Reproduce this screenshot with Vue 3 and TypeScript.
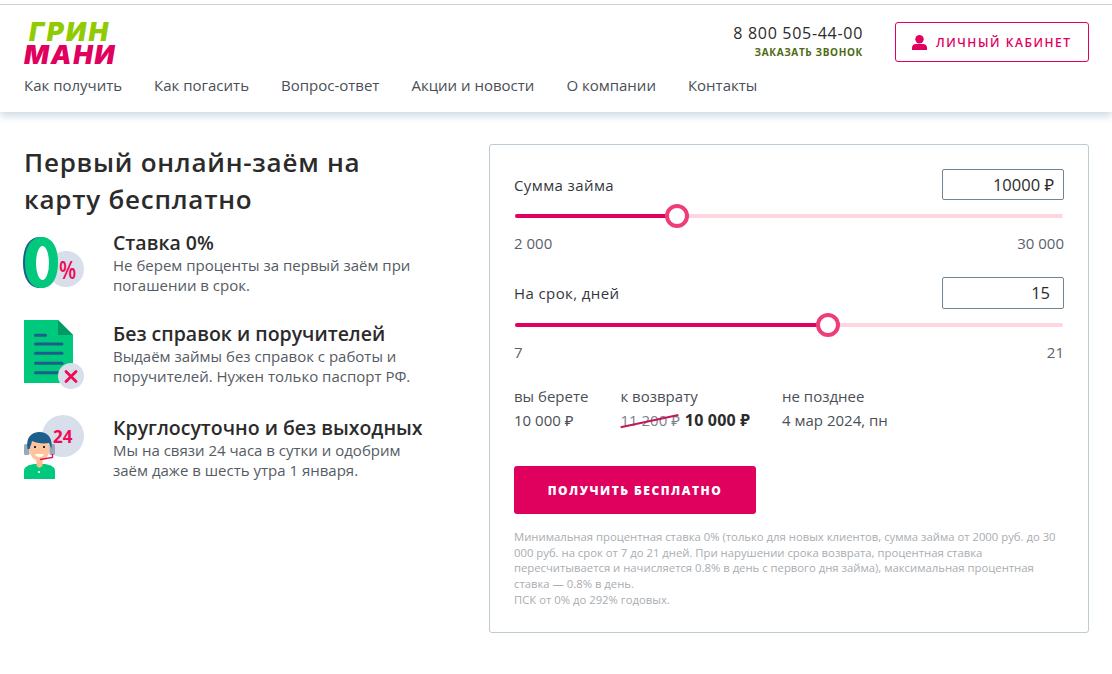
<script setup lang="ts">
const navItems = ['Как получить', 'Как погасить', 'Вопрос-ответ', 'Акции и новости', 'О компании', 'Контакты']

const sliders = [
  { label: 'Сумма займа', value: '10000 ₽', min: '2 000', max: '30 000', percent: 29.6, cls: 'money' },
  { label: 'На срок, дней', value: '15', min: '7', max: '21', percent: 57.1, cls: 'days' },
]
</script>

<template>
  <div class="page">
    <header class="header">
      <div class="header-top">
        <div class="logo">
          <span class="logo-green">ГРИН</span>
          <span class="logo-pink">МАНИ</span>
        </div>
        <div class="contacts">
          <div class="phone-box">
            <div class="phone">8 800 505-44-00</div>
            <div class="callback">ЗАКАЗАТЬ ЗВОНОК</div>
          </div>
          <a class="cabinet">
            <svg width="15" height="15" viewBox="0 0 15 15">
              <circle cx="7.500" cy="4.200" r="4.200" fill="#e0005e" />
              <path d="M0 15 V12.500 C0 10 2 9 4 9 H11 C13 9 15 10 15 12.500 V15 Z" fill="#e0005e" />
            </svg>
            ЛИЧНЫЙ КАБИНЕТ
          </a>
        </div>
      </div>
      <nav class="nav">
        <a v-for="item in navItems" :key="item">{{ item }}</a>
      </nav>
    </header>

    <main class="main">
      <section class="benefits">
        <h1>Первый онлайн-заём на<br />карту бесплатно</h1>

        <div class="benefit">
          <svg class="benefit-icon" width="62" height="64" viewBox="0 -1 62 64">
            <circle cx="42" cy="37" r="18" fill="#d8deea" />
            <path d="M16 5 C27 5 33 15 33 30.500 C33 46 27 56 16 56 C5 56 -1 46 -1 30.500 C-1 15 5 5 16 5 Z" fill="#1c5f8c" />
            <path d="M17.500 5 C28 5 34 15 34 30.500 C34 46 28 56 17.500 56 C7 56 1 46 1 30.500 C1 15 7 5 17.500 5 Z" fill="#00c97d" />
            <ellipse cx="18.500" cy="31" rx="6.500" ry="17" fill="#fff" />
            <text x="35" y="47" class="percent" transform="translate(35 47) scale(0.8 1) translate(-35 -47)">%</text>
          </svg>
          <div class="benefit-text">
            <h3>Ставка 0%</h3>
            <p>Не берем проценты за первый заём при погашении в срок.</p>
          </div>
        </div>

        <div class="benefit wide-gap">
          <svg class="benefit-icon" width="62" height="64" viewBox="0 0 62 64">
            <path d="M0 -2 H34 L49 13 V61 H0 Z" fill="#00c97d" />
            <path d="M34 -2 L49 13 H34 Z" fill="#029a62" />
            <g stroke="#1c5f8c" stroke-width="3" stroke-linecap="round">
              <path d="M11.500 13.300 H21.500" />
              <path d="M11.500 22 H38" />
              <path d="M11.500 31.300 H38" />
              <path d="M11.500 41.300 H38" />
              <path d="M11.500 50.700 H38" />
            </g>
            <circle cx="47" cy="54" r="13" fill="#d8deea" />
            <path d="M42 49.500 L52 59.500 M52 49.500 L42 59.500" stroke="#ef0a55" stroke-width="2.800" stroke-linecap="round" />
          </svg>
          <div class="benefit-text">
            <h3>Без справок и поручителей</h3>
            <p>Выдаём займы без справок с работы и поручителей. Нужен только паспорт РФ.</p>
          </div>
        </div>

        <div class="benefit">
          <svg class="benefit-icon" width="62" height="64" viewBox="0 0 62 64">
            <circle cx="39" cy="20" r="21" fill="#d8deea" />
            <text x="29" y="27" class="hours">24</text>
            <path d="M0 63 V55 C0 51 4 49 10 48 H21 C27 49 31 51 31 55 V63 Z" fill="#00c97d" />
            <path d="M12.500 42 H18.500 V50 L15.500 52 L12.500 50 Z" fill="#ffb98c" />
            <rect x="0" y="28" width="5.500" height="11" rx="1.500" fill="#9aa8b8" />
            <rect x="25.500" y="28" width="5.500" height="11" rx="1.500" fill="#9aa8b8" />
            <ellipse cx="15.500" cy="33" rx="10" ry="12" fill="#ffc49b" />
            <path d="M3.500 33 C1.500 21 8 16 15.500 16 C23 16 29 21 27.500 33 L25 27 C19 28 12 27 8 25 C7.500 28 6 31 5.500 33 Z" fill="#1c5f8c" />
            <path d="M10 31 H12 M19 31 H21" stroke="#1f2a3a" stroke-width="2" />
            <path d="M11 38 H20 C19 42 12 42 11 38 Z" fill="#fff" />
            <path d="M16 43.500 L28.500 41.500 V38" fill="none" stroke="#ef0a55" stroke-width="1.400" />
            <circle cx="15" cy="56" r="1.100" fill="#fff" />
          </svg>
          <div class="benefit-text">
            <h3>Круглосуточно и без выходных</h3>
            <p>Мы на связи 24 часа в сутки и одобрим заём даже в шесть утра 1 января.</p>
          </div>
        </div>
      </section>

      <section class="calc">
        <div v-for="s in sliders" :key="s.label" class="field">
          <div class="field-head">
            <label>{{ s.label }}</label>
            <div class="field-input" :class="s.cls">{{ s.value }}</div>
          </div>
          <div class="slider">
            <div class="slider-fill" :style="{ width: s.percent + '%' }"></div>
            <div class="slider-thumb" :style="{ left: s.percent + '%' }"></div>
          </div>
          <div class="limits">
            <span>{{ s.min }}</span>
            <span>{{ s.max }}</span>
          </div>
        </div>

        <div class="summary">
          <div>
            <div class="summary-title">вы берете</div>
            <div>10 000 ₽</div>
          </div>
          <div>
            <div class="summary-title">к возврату</div>
            <div><span class="old-price">11 200 ₽</span> <b>10 000 ₽</b></div>
          </div>
          <div>
            <div class="summary-title">не позднее</div>
            <div>4 мар 2024, пн</div>
          </div>
        </div>

        <button class="submit">ПОЛУЧИТЬ БЕСПЛАТНО</button>

        <p class="note">
          Минимальная процентная ставка 0% (только для новых клиентов, сумма займа от 2000 руб. до 30<br />000 руб. на срок от 7 до 21 дней. При нарушении срока возврата, процентная ставка<br />пересчитывается и начисляется 0.8% в день с первого дня займа), максимальная процентная<br />ставка — 0.8% в день.<br />ПСК от 0% до 292% годовых.
        </p>
      </section>
    </main>
  </div>
</template>

<style scoped>
.page {
  font-family: "Open Sans", "Noto Sans", sans-serif;
  color: #2b2b2b;
  height: 669px;
  background: #fff;
  border-top: 1px solid #cfcfcf;
  margin-top: 4px;
  box-sizing: border-box;
  overflow: hidden;
}
.header {
  height: 107px;
  box-sizing: border-box;
  padding: 15px 23px 0 24px;
  box-shadow: 0 4px 8px rgba(100, 140, 165, 0.32);
}
.header-top {
  display: flex;
  justify-content: space-between;
  height: 46px;
}
.logo {
  display: flex;
  flex-direction: column;
  font-family: Inter, sans-serif;
  font-weight: 900;
  font-style: italic;
  font-size: 26px;
  line-height: 23px;
}
.logo-green {
  color: #8fcb00;
  margin-left: 5px;
  letter-spacing: 2.400px;
}
.logo-pink {
  color: #e0005e;
  letter-spacing: 1.800px;
}
.contacts {
  display: flex;
  gap: 32px;
  margin-top: 2px;
}
.phone-box {
  text-align: right;
  padding-top: 1px;
}
.phone {
  font-size: 16px;
  line-height: 21px;
  letter-spacing: 0.700px;
  color: #2b2b2b;
}
.callback {
  font-size: 10px;
  line-height: 16px;
  font-weight: 700;
  letter-spacing: 0.650px;
  color: #4d6a12;
}
.cabinet {
  display: flex;
  align-items: center;
  gap: 9px;
  width: 194px;
  height: 40px;
  box-sizing: border-box;
  padding-left: 16px;
  border: 1px solid #e0005e;
  border-radius: 3px;
  color: #e0005e;
  font-size: 12px;
  font-weight: 600;
  letter-spacing: 1.550px;
}
.nav {
  display: flex;
  gap: 32px;
  margin-top: 9px;
  font-size: 15px;
  line-height: 20px;
  color: #4a4f57;
}
.main {
  display: flex;
  padding: 32px 23px 0 24px;
}
.benefits {
  width: 465px;
  flex: none;
}
h1 {
  margin: 0 0 13px;
  font-size: 26px;
  line-height: 37px;
  font-weight: 600;
  letter-spacing: 0.750px;
  color: #2b2b2b;
}
.benefit {
  display: flex;
  margin-bottom: 27px;
}
.benefit.wide-gap {
  margin-bottom: 30px;
}
.benefit-icon {
  width: 62px;
  height: 64px;
  flex: none;
  margin-right: 27px;
  overflow: visible;
}
.benefit-text {
  width: 325px;
}
h3 {
  margin: 0;
  font-size: 19.500px;
  line-height: 24px;
  font-weight: 600;
}
.benefit-text p {
  margin: 0;
  font-size: 15px;
  line-height: 20px;
  color: #555b63;
}
.percent {
  font-family: "Open Sans", sans-serif;
  font-size: 25px;
  font-weight: 600;
  fill: #ef0a55;
}
.hours {
  font-family: "Open Sans", sans-serif;
  font-size: 17px;
  font-weight: 700;
  fill: #ef0a55;
}
.calc {
  width: 600px;
  height: 489px;
  box-sizing: border-box;
  flex: none;
  border: 1px solid #bccbd4;
  border-radius: 3px;
  padding: 24px 24px 0;
}
.field {
  margin-bottom: 24px;
}
.field + .field {
  margin-bottom: 23px;
}
.field-head {
  display: flex;
  justify-content: space-between;
  align-items: center;
}
.field-head label {
  font-size: 15px;
  font-weight: 500;
  letter-spacing: 0.400px;
  color: #33373d;
}
.field-input {
  width: 122px;
  height: 31px;
  box-sizing: border-box;
  border: 1px solid #6f8794;
  border-radius: 2px;
  padding-right: 9px;
  text-align: right;
  font-size: 16.500px;
  line-height: 29px;
  color: #2b2b2b;
}
.field-input.days {
  height: 32px;
  padding-right: 13px;
  line-height: 30px;
}
.slider {
  position: relative;
  height: 4px;
  margin: 14px 1px 0;
  border-radius: 2px;
  background: #ffd6e0;
}
.slider-fill {
  height: 100%;
  border-radius: 2px;
  background: #e0005e;
}
.slider-thumb {
  position: absolute;
  top: 50%;
  width: 24px;
  height: 24px;
  box-sizing: border-box;
  transform: translate(-50%, -50%);
  border: 4.500px solid #ee3d78;
  border-radius: 50%;
  background: #fff;
}
.limits {
  display: flex;
  justify-content: space-between;
  margin-top: 15px;
  font-size: 15px;
  line-height: 20px;
  color: #5b626b;
}
.summary {
  display: flex;
  gap: 32px;
  font-size: 15px;
  line-height: 23px;
  color: #4a4f57;
}
.summary-title {
  margin-bottom: 1px;
}
.summary b {
  margin-left: 1px;
  font-size: 16px;
  letter-spacing: 0.200px;
  color: #2b2b2b;
}
.old-price {
  position: relative;
  color: #7b828a;
}
.old-price::after {
  content: "";
  position: absolute;
  left: 0;
  right: 0;
  top: 10px;
  height: 2px;
  background: #c2185b;
  transform: rotate(-12deg);
}
.submit {
  display: block;
  width: 242px;
  height: 48px;
  margin-top: 34px;
  border: none;
  border-radius: 3px;
  background: #e0005e;
  color: #fff;
  font-family: inherit;
  font-size: 12px;
  font-weight: 800;
  letter-spacing: 1.500px;
}
.note {
  margin: 15px 0 0;
  font-size: 11.300px;
  line-height: 15.700px;
  color: #a8adb3;
  white-space: nowrap;
}
</style>
